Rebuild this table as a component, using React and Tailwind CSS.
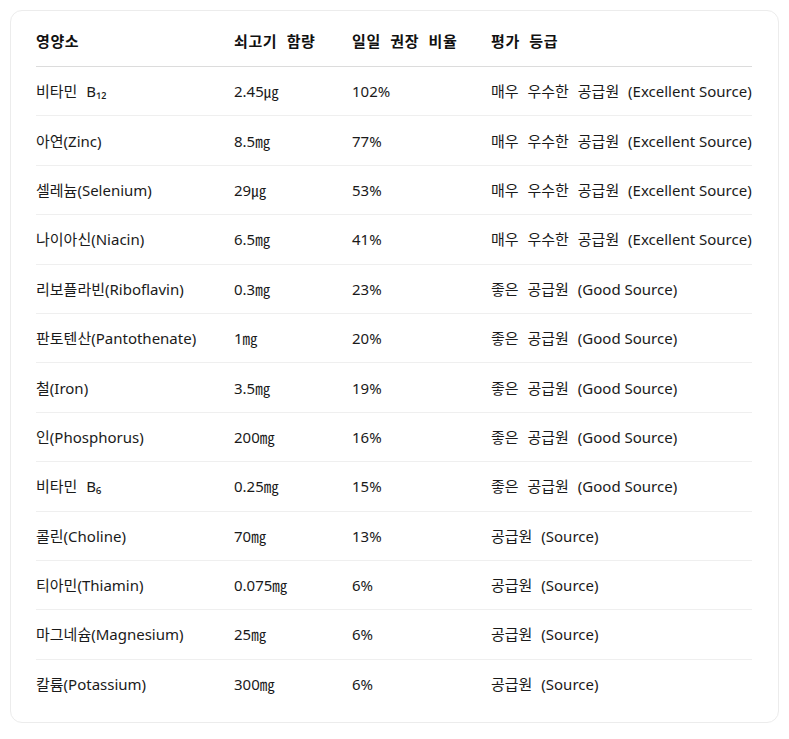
import React from "react";

const rows = [
  ["비타민 B₁₂", "2.45㎍", "102%", "매우 우수한 공급원 (Excellent Source)"],
  ["아연(Zinc)", "8.5㎎", "77%", "매우 우수한 공급원 (Excellent Source)"],
  ["셀레늄(Selenium)", "29㎍", "53%", "매우 우수한 공급원 (Excellent Source)"],
  ["나이아신(Niacin)", "6.5㎎", "41%", "매우 우수한 공급원 (Excellent Source)"],
  ["리보플라빈(Riboflavin)", "0.3㎎", "23%", "좋은 공급원 (Good Source)"],
  ["판토텐산(Pantothenate)", "1㎎", "20%", "좋은 공급원 (Good Source)"],
  ["철(Iron)", "3.5㎎", "19%", "좋은 공급원 (Good Source)"],
  ["인(Phosphorus)", "200㎎", "16%", "좋은 공급원 (Good Source)"],
  ["비타민 B₆", "0.25㎎", "15%", "좋은 공급원 (Good Source)"],
  ["콜린(Choline)", "70㎎", "13%", "공급원 (Source)"],
  ["티아민(Thiamin)", "0.075㎎", "6%", "공급원 (Source)"],
  ["마그네슘(Magnesium)", "25㎎", "6%", "공급원 (Source)"],
  ["칼륨(Potassium)", "300㎎", "6%", "공급원 (Source)"],
];

function Cell({ text }) {
  let last = -1;
  for (let k = 0; k < text.length; k++) {
    const c = text.charCodeAt(k);
    if (c >= 0xac00 && c <= 0xd7a3) last = k;
  }
  if (last < 0) return text;
  let cut = last + 1;
  if (text[cut] === " ") cut += 1;
  return (
    <>
      <span className="[word-spacing:5px]">{text.slice(0, cut)}</span>
      {text.slice(cut)}
    </>
  );
}

export default function App() {
  return (
    <div
      className="bg-white min-h-[739px] p-[10px]"
      style={{ fontFamily: '"Noto Sans", "Noto Sans CJK KR", sans-serif' }}
    >
      <div className="w-[769px] h-[713px] border border-[#ececec] rounded-[12px] pt-5 pl-[25px] pr-[26px]">
        <table className="table-fixed w-[716px] border-collapse text-[15px] text-[#1a1a1a]">
          <colgroup>
            <col className="w-[198px]" />
            <col className="w-[118px]" />
            <col className="w-[139px]" />
            <col className="w-[261px]" />
          </colgroup>
          <thead>
            <tr className="border-b border-[#dcdcdc]">
              {["영양소", "쇠고기 함량", "일일 권장 비율", "평가 등급"].map((h) => (
                <th key={h} className="text-left font-bold text-[#111] leading-5 tracking-[0.6px] [word-spacing:5px] pb-[15px] p-0 whitespace-nowrap">
                  {h}
                </th>
              ))}
            </tr>
          </thead>
          <tbody>
            {rows.map((r, i) => (
              <tr
                key={i}
                className={i < rows.length - 1 ? "border-b border-[#efefef]" : ""}
              >
                {r.map((c, j) => (
                  <td key={j} className="p-0 h-[49.4px] leading-5 whitespace-nowrap align-middle">
                    <Cell text={c} />
                  </td>
                ))}
              </tr>
            ))}
          </tbody>
        </table>
      </div>
    </div>
  );
}
